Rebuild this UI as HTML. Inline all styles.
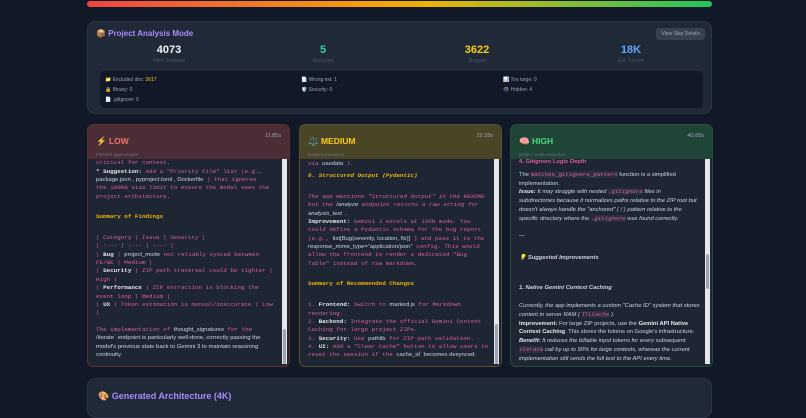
<!DOCTYPE html>
<html><head><meta charset="utf-8"><style>
*{box-sizing:border-box;margin:0;padding:0}
body{width:806px;height:407px;overflow:hidden;background:#111827;font-family:"Liberation Sans",sans-serif;position:relative;color:#cbd5e1}
.bar{position:absolute;left:87px;top:1px;width:625px;height:6px;border-radius:3px;background:linear-gradient(90deg,#ef4444,#f59e0b 45%,#eab308 55%,#22c55e)}
.panel{position:absolute;left:87px;width:625px;background:#1f2937;border-radius:8px;border:1px solid #2a3444}
.ttl{position:absolute;font-weight:bold;color:#a78bfa;font-size:8px}
.stat{position:absolute;width:120px;text-align:center}
.stat b{display:block;font-size:11px;line-height:13px}
.stat span{display:block;font-size:5px;color:#4b5563;line-height:8px}
.skip{position:absolute;left:12px;top:49px;width:603px;height:37px;background:#111827;border-radius:4px;font-size:5px;color:#9ca3af}
.skip div{position:absolute}
.btn{position:absolute;right:6px;top:6px;background:#374151;color:#9ca3af;font-size:5px;padding:3px 5px;border-radius:3px}
.card{position:absolute;top:124px;width:203px;height:243px;border-radius:6px;background:#1e2533;overflow:hidden;border:1px solid #3a3a3a}
.hd{height:34px;padding:6px 8px;position:relative;z-index:2}
.hd b{font-size:8.5px}
.hd i{position:absolute;right:8px;top:8px;font-style:normal;font-size:5.5px;color:#9ca3af}
.hd small{display:block;font-size:4.5px;color:#6b7280;margin-top:3px}
.bd{position:absolute;left:8px;top:26px;right:10px;bottom:4px;overflow:hidden;font-family:"Liberation Mono",monospace;font-size:5.9px;line-height:8.35px;color:#db5f9a;z-index:1}
.sb{position:absolute;right:2px;top:34px;width:5px;bottom:2px;background:#e5e7eb;z-index:3}
.sb div{position:absolute;left:1px;width:3px;background:#9ca3af;border-radius:2px}
.w{color:#e5e7eb;font-weight:bold}.s{font-family:"Liberation Sans",sans-serif;color:#cbd5e1}
.y{color:#eab308;font-weight:bold}
.it{font-style:italic}
.hb{font-family:"Liberation Sans",sans-serif;font-size:5.8px;line-height:8.8px;color:#cbd5e1}
.hb .it{color:#cbd5e1}
.pk{color:#db5f9a;font-weight:bold}
.cd{font-family:"Liberation Mono",monospace;color:#db5f9a;background:#2a2f3d}
.g{height:4px}
</style></head><body>
<div class="bar"></div>
<div class="panel" style="top:21px;height:93px">
 <div class="ttl" style="left:8px;top:7px">📦 Project Analysis Mode</div>
 <div class="btn">View Skip Details</div>
 <div class="stat" style="left:21px;top:22px"><b style="color:#f3f4f6">4073</b><span>Files Scanned</span></div>
 <div class="stat" style="left:175px;top:22px"><b style="color:#34d399">5</b><span>Analyzed</span></div>
 <div class="stat" style="left:329px;top:22px"><b style="color:#facc15">3622</b><span>Skipped</span></div>
 <div class="stat" style="left:483px;top:22px"><b style="color:#60a5fa">18K</b><span>Est. Tokens</span></div>
 <div class="skip">
  <div style="left:5px;top:6px">📁 Excluded dirs: <span style="color:#facc15">3617</span></div>
  <div style="left:201px;top:6px">📄 Wrong ext: 1</div>
  <div style="left:403px;top:6px">📊 Too large: 0</div>
  <div style="left:5px;top:16px">🔒 Binary: 0</div>
  <div style="left:201px;top:16px">🛡️ Security: 0</div>
  <div style="left:403px;top:16px">👁 Hidden: 4</div>
  <div style="left:5px;top:26px">📄 .gitignore: 0</div>
 </div>
</div>

<div class="card" style="left:87px;border-color:#5b2f36">
 <div class="hd" style="background:#4a2d35"><b style="color:#f87171">⚡ LOW</b><i>11.85s</i><small>Fast but approximate</small></div>
 <div class="bd" style="top:26px">
skipping package.json at 9KB, but package.json is<br>
critical for context.<br>
<span class="w">* Suggestion:</span> Add a "Priority File" list (e.g.,<br>
<span class="s">package.json , pyproject.toml , Dockerfile</span> ) that ignores<br>
the 100KB size limit to ensure the model sees the<br>project architecture.<br><br><div class="g"></div>
<span class="y">Summary of Findings</span><br><br><div class="g"></div>
| Category | Issue | Severity |<br>| :--- | :--- | :--- |<br>
| <span class="w">Bug</span> | <span class="s">project_mode</span> not reliably synced between<br>FE/BE | Medium |<br>
| <span class="w">Security</span> | ZIP path traversal could be tighter |<br>High |<br>
| <span class="w">Performance</span> | ZIP extraction is blocking the<br>event loop | Medium |<br>
| <span class="w">UX</span> | Token estimation is manual/inaccurate | Low<br>|<br><br>
The implementation of <span class="s">thought_signatures</span> for the<br>
<span class="s">/iterate` endpoint is particularly well-done, correctly passing the<br>model's previous state back to Gemini 3 to maintain reasoning<br>continuity.</span>
 </div>
 <div class="sb"><div style="top:170px;height:35px"></div></div>
</div>

<div class="card" style="left:299px;border-color:#55502a">
 <div class="hd" style="background:#4a4526"><b style="color:#facc15">⚖️ MEDIUM</b><i>22.28s</i><small>Balanced analysis</small></div>
 <div class="bd it" style="top:35px">
via <span class="s">usedata</span> ).<br><div class="g"></div>
<span class="y">8. Structured Output (Pydantic)</span><br><div class="g"></div><br>
The app mentions "Structured Output" in the README<br>but the <span class="s">/analyze</span> endpoint returns a raw string for<br><span class="s">analysis_text</span> .<br>
<span style="font-style:normal"><span class="w">Improvement:</span> Gemini 3 excels at JSON mode. You<br>could define a Pydantic schema for the bug report<br>(e.g., <span class="s">list[Bug(severity, location, fix)]</span> ) and pass it to the<br><span class="s">response_mime_type="application/json"</span> config. This would<br>allow the frontend to render a dedicated "Bug<br>Table" instead of raw markdown.<br><br><div class="g"></div>
<span class="y">Summary of Recommended Changes</span><br><br><div class="g"></div>
1. <span class="w">Frontend:</span> Switch to <span class="s">marked.js</span> for Markdown<br>rendering.<br>
2. <span class="w">Backend:</span> Integrate the official Gemini Context<br>Caching for large project ZIPs.<br>
3. <span class="w">Security:</span> Use <span class="s">pathlib</span> for ZIP path validation.<br>
4. <span class="w">UI:</span> Add a "Clear Cache" button to allow users to<br>reset the session if the <span class="s">cache_id` becomes desynced.</span></span>
 </div>
 <div class="sb"><div style="top:165px;height:40px"></div></div>
</div>

<div class="card" style="left:510px;border-color:#2a4a3c">
 <div class="hd" style="background:#1f4536"><b style="color:#4ade80">🧠 HIGH</b><i>40.88s</i><small>Deep + code execution</small></div>
 <div class="bd hb" style="top:33px">
<span class="pk">4. Gitignore Logic Depth</span><br><div class="g"></div>
The <span class="cd">matches_gitignore_pattern</span> function is a simplified<br>implementation.<br>
<span class="it"><b class="w">Issue:</b> It may struggle with nested <span class="cd">.gitignore</span> files in<br>subdirectories because it normalizes paths relative to the ZIP root but<br>doesn't always handle the "anchored" ( / ) pattern relative to the<br>specific directory where the <span class="cd">.gitignore</span> was found correctly.</span><br><br>
—<br><br><div class="g"></div>
<span class="it y">💡 Suggested Improvements</span><br><br><br><div class="g"></div>
<span class="pk it">1. Native Gemini Context Caching</span><br><br>
<span class="it">Currently, the app implements a custom "Cache ID" system that stores<br>content in server RAM ( <span class="cd">TTLCache</span> ).</span><br>
<b class="w">Improvement:</b> For large ZIP projects, use the <b class="w">Gemini API Native<br>Context Caching</b>. This stores the tokens on Google's infrastructure.<br>
<span class="it"><b class="w">Benefit:</b> It reduces the billable input tokens for every subsequent<br><span class="cd">iterate</span> call by up to 90% for large contexts, whereas the current<br>implementation still sends the full text to the API every time.</span>
 </div>
 <div class="sb"><div style="top:95px;height:35px"></div></div>
</div>

<div class="panel" style="top:378px;height:40px">
 <div class="ttl" style="left:10px;top:12px;font-size:9px">🎨 Generated Architecture (4K)</div>
</div>
</body></html>
